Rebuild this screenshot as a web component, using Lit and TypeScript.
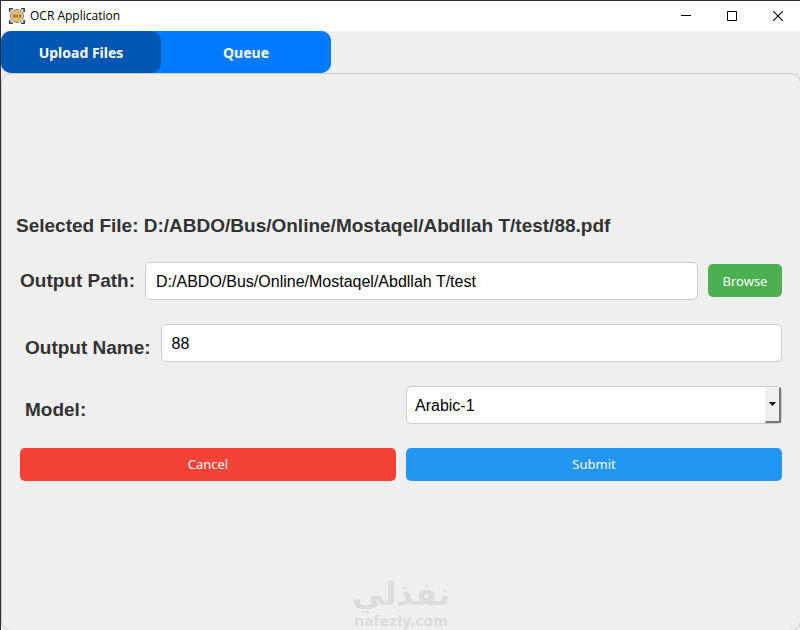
import { LitElement, html, css } from "lit";
import { customElement, state } from "lit/decorators.js";

@customElement("app-root")
export class AppRoot extends LitElement {
  static styles = css`
    :host {
      display: flex;
      flex-direction: column;
      box-sizing: border-box;
      min-height: 100vh;
      overflow: hidden;
      border-top: 1px solid #323232;
      border-left: 1px solid #323032;
      background: #efefef;
      color: #333;
      font-family: "Liberation Sans", Arial, sans-serif;
    }
    * {
      box-sizing: border-box;
    }
    .titlebar {
      display: flex;
      align-items: center;
      height: 30px;
      padding-left: 8px;
      background: #fff;
      color: #000;
    }
    .logo {
      width: 16px;
      height: 16px;
      margin-right: 5px;
    }
    .title {
      flex: 1;
      margin: 0;
      font: 400 12px/16px "Open Sans", "Noto Sans", sans-serif;
    }
    .winbtn {
      display: flex;
      align-items: center;
      justify-content: center;
      width: 46px;
      height: 30px;
      padding: 0;
      border: 0;
      background: none;
    }
    .winbtn:last-child {
      width: 45px;
    }
    .tabs {
      display: flex;
    }
    .tab {
      width: 170px;
      height: 42px;
      padding: 2px 0 0;
      border: 0;
      border-radius: 0 10px 10px 0;
      background: #007bff;
      color: #fff;
      font: 700 14px/20px "Noto Sans", "Open Sans", sans-serif;
    }
    .tab:first-child {
      width: 160px;
      border-radius: 10px 0 0 10px;
    }
    .tab.active {
      background: #0056b3;
      border-radius: 10px;
    }
    .tabgroup {
      display: flex;
      border-radius: 10px;
      background: #007bff;
    }
    .pane {
      flex: 1;
      display: flex;
      flex-direction: column;
      position: relative;
      margin: 0 -1px -1px 0;
      border: 1px solid #ccc;
      border-radius: 10px;
    }
    .form {
      flex: 1;
      display: flex;
      flex-direction: column;
      justify-content: center;
      gap: 24px;
      margin: 0;
      padding: 0 18px 10px 18px;
    }
    .selected,
    .label {
      margin: 0;
      font-size: 19px;
      line-height: 24px;
      font-weight: 700;
      white-space: nowrap;
    }
    .selected {
      margin-left: -4px;
    }
    .row {
      display: flex;
      align-items: center;
      gap: 10px;
    }
    .indent {
      padding: 10px 0 0 5px;
    }
    .split {
      display: grid;
      grid-template-columns: 1fr 1fr;
      gap: 10px;
      align-items: center;
    }
    .field {
      flex: 1;
      min-width: 0;
      width: 100%;
      height: 38px;
      padding: 2px 10px 0;
      border: 1px solid #ccc;
      border-radius: 5px;
      background: #fff;
      color: #000;
      font: 400 16px/20px "Liberation Sans", Arial, sans-serif;
      outline: none;
    }
    .combo {
      position: relative;
    }
    .combo .field {
      display: block;
      padding: 2px 24px 0 8px;
      appearance: none;
    }
    .drop {
      position: absolute;
      top: 1px;
      right: 1px;
      bottom: 1px;
      width: 16px;
      display: flex;
      align-items: center;
      justify-content: center;
      border: solid;
      border-width: 1px 2px 2px 1px;
      border-color: #f4f4f4 #777 #777 #f4f4f4;
      background: #f0f0f0;
      pointer-events: none;
    }
    .btn {
      height: 33px;
      padding: 0 14px;
      border: 0;
      border-radius: 5px;
      color: #fff;
      font: 400 13px/20px "Noto Sans", "Open Sans", sans-serif;
    }
    .browse {
      width: 74px;
      background: #4caf50;
    }
    .cancel {
      background: #f44336;
    }
    .submit {
      background: #2196f3;
    }
    .watermark {
      position: absolute;
      left: 0;
      right: 0;
      bottom: 1px;
      display: flex;
      flex-direction: column;
      align-items: center;
      color: #dcdcdc;
      font-family: "DejaVu Sans", sans-serif;
      font-weight: 700;
      pointer-events: none;
    }
    .wm-ar {
      font-size: 32px;
      line-height: 38px;
    }
    .wm-en {
      font-size: 14px;
      line-height: 16px;
    }
  `;

  @state() private tab = 0;

  render() {
    return html`
      <header class="titlebar">
        <svg class="logo" viewBox="0 0 16 16" aria-hidden="true">
          <path d="M.8 4V.8H4M12 .8h3.2V4M15.2 12v3.2H12M4 15.2H.8V12" fill="none" stroke="#5a3f3c" stroke-width="1.6" />
          <circle cx="8" cy="8" r="6.6" fill="#e9e2d0" stroke="#8d8781" stroke-width="1" />
          <circle cx="8" cy="8" r="5" fill="#f0c453" stroke="#a99b80" stroke-width=".8" />
          <path d="M3 6.4h10v3.3H3z" fill="#e3b750" />
          <path d="M4.4 7h1.8v2H4.4zM9 7H7.3v2H9M10.2 9.4V7h1.6v1.1h-1.4l1.5 1.3" fill="none" stroke="#7d6238" stroke-width=".7" />
        </svg>
        <h1 class="title">OCR Application</h1>
        <button class="winbtn" aria-label="Minimize">
          <svg width="10" height="10"><path d="M0 4.5h10" stroke="#000" /></svg>
        </button>
        <button class="winbtn" aria-label="Maximize">
          <svg width="10" height="10"><path d="M.5.5h9v9h-9z" fill="none" stroke="#000" /></svg>
        </button>
        <button class="winbtn" aria-label="Close">
          <svg width="10" height="10"><path d="M0 0l10 10M10 0L0 10" stroke="#000" stroke-width="1.1" /></svg>
        </button>
      </header>
      <nav class="tabs">
        <div class="tabgroup" role="tablist">
          ${["Upload Files", "Queue"].map(
            (name, i) => html`<button
              class="tab ${this.tab === i ? "active" : ""}"
              role="tab"
              aria-selected=${this.tab === i}
              @click=${() => (this.tab = i)}
            >${name}</button>`
          )}
        </div>
      </nav>
      <main class="pane">
        <form class="form" @submit=${(e: Event) => e.preventDefault()}>
          <p class="selected">Selected File: D:/ABDO/Bus/Online/Mostaqel/Abdllah T/test/88.pdf</p>
          <div class="row">
            <label class="label" for="path">Output Path:</label>
            <input class="field" id="path" type="text" value="D:/ABDO/Bus/Online/Mostaqel/Abdllah T/test" />
            <button class="btn browse" type="button">Browse</button>
          </div>
          <div class="row">
            <label class="label indent" for="name">Output Name:</label>
            <input class="field" id="name" type="text" value="88" />
          </div>
          <div class="split">
            <label class="label indent" for="model">Model:</label>
            <div class="combo">
              <select class="field" id="model">
                <option>Arabic-1</option>
              </select>
              <span class="drop">
                <svg width="7" height="4"><path d="M0 0h7L3.5 4z" fill="#000" /></svg>
              </span>
            </div>
          </div>
          <div class="split">
            <button class="btn cancel" type="button">Cancel</button>
            <button class="btn submit" type="submit">Submit</button>
          </div>
        </form>
        <div class="watermark">
          <span class="wm-ar" lang="ar" dir="rtl">نفذلي</span>
          <span class="wm-en">nafezly.com</span>
        </div>
      </main>
    `;
  }
}
